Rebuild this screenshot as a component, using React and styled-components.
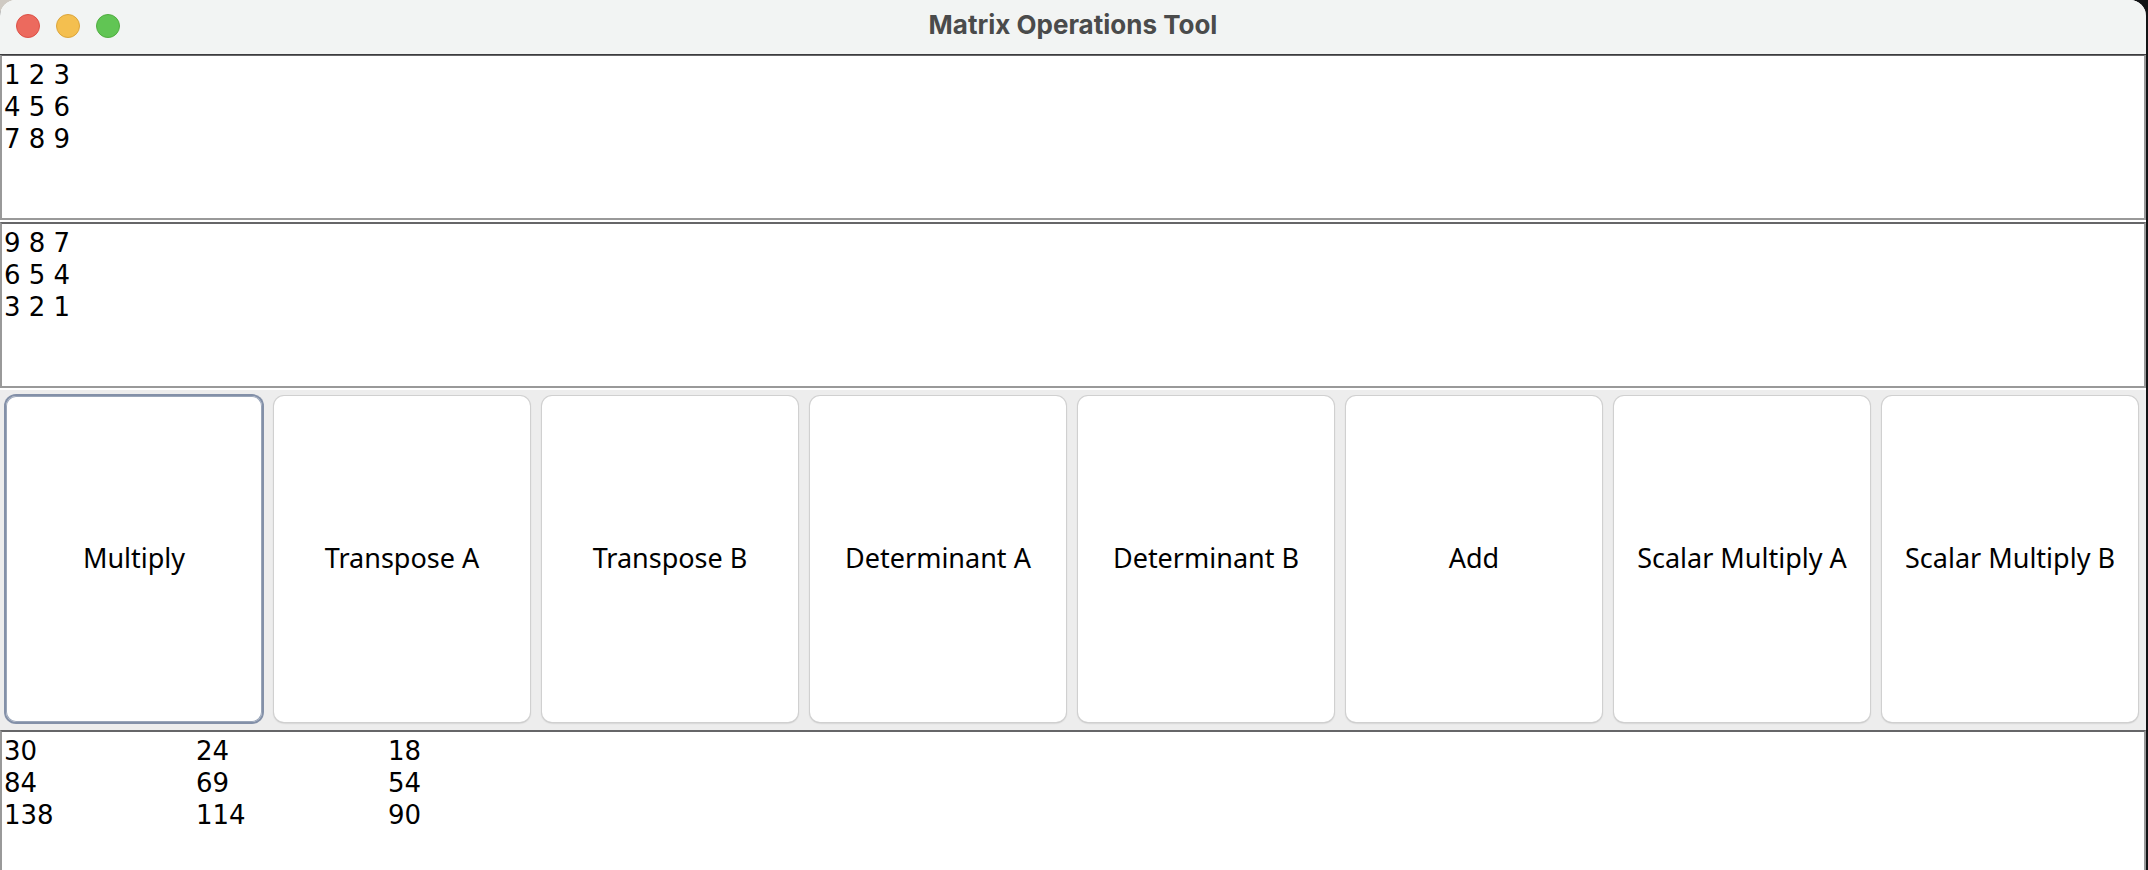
import React, { useState } from "react";
import styled, { createGlobalStyle } from "styled-components";

const GlobalStyle = createGlobalStyle`
  * { box-sizing: border-box; }
  html, body, #root { height: 100%; }
  body {
    margin: 0;
    overflow: hidden;
    background: linear-gradient(90deg, #cfcac3 0 50%, #121315 50%);
  }
`;

const Window = styled.main`
  display: flex;
  flex-direction: column;
  height: 100%;
  margin-right: 2px;
  overflow: hidden;
  border-radius: 16px 16px 0 0;
  background: #ffffff;
  color: #000000;
`;

const TitleBar = styled.header`
  position: relative;
  display: grid;
  grid-template-columns: 1fr auto 1fr;
  align-items: center;
  flex: none;
  height: 54px;
  padding: 0 16px 2px;
  background: #f2f4f3;
  box-shadow: 0 1px 0 #3c3c3e;
`;

const WindowControls = styled.div`
  display: flex;
  gap: 16px;
`;

const Light = styled.button`
  width: 24px;
  height: 24px;
  padding: 0;
  border: 1px solid ${(p) => p.$edge};
  border-radius: 50%;
  background: ${(p) => p.$fill};
`;

const Title = styled.h1`
  margin: 0;
  padding-bottom: 2px;
  font-family: Inter, sans-serif;
  font-size: 26px;
  font-weight: 700;
  line-height: 32px;
  color: #4a4b4b;
`;

const MatrixArea = styled.textarea`
  display: block;
  flex: ${(p) => (p.$fill ? "1 1 0" : "none")};
  width: 100%;
  height: 166px;
  margin: 0 0 ${(p) => (p.$fill ? 0 : 2)}px;
  padding: 3px 2px 0;
  border: 2px solid #999999;
  border-top-color: #666668;
  border-bottom-width: ${(p) => (p.$fill ? 0 : 2)}px;
  border-radius: 0;
  outline: none;
  resize: none;
  overflow: hidden;
  background: #ffffff;
  color: inherit;
  font-family: "Lucida Grande", "DejaVu Sans", sans-serif;
  font-size: 26px;
  line-height: 32px;
  tab-size: 192px;
`;

const ButtonPanel = styled.section`
  display: grid;
  grid-template-columns: repeat(8, 1fr);
  gap: 12px;
  flex: none;
  height: 340px;
  padding: 6px 8px 8px 6px;
  background: #ededed;
`;

const Operation = styled.button`
  min-width: 0;
  padding: 0 0 2px;
  border: 0;
  border-radius: 10px;
  outline: none;
  background: #ffffff;
  box-shadow: ${(p) =>
    p.$selected
      ? "inset 0 0 0 1px #9aa6b9, 0 0 0 2px #8390a8"
      : "0 0 0 1px #d0d0d0, 0 1px 2px rgba(0, 0, 0, 0.3)"};
  color: inherit;
  font-family: "Lucida Grande", "Noto Sans", sans-serif;
  font-size: 27px;
  line-height: 32px;
  white-space: nowrap;
`;

const lights = [
  { name: "Close", fill: "#ec6a5e", edge: "#dc5147" },
  { name: "Minimize", fill: "#f4bf4f", edge: "#dba53c" },
  { name: "Zoom", fill: "#61c554", edge: "#51ad40" },
];

const operations = [
  "Multiply",
  "Transpose A",
  "Transpose B",
  "Determinant A",
  "Determinant B",
  "Add",
  "Scalar Multiply A",
  "Scalar Multiply B",
];

export default function App() {
  const [matrixA, setMatrixA] = useState("1 2 3\n4 5 6\n7 8 9");
  const [matrixB, setMatrixB] = useState("9 8 7\n6 5 4\n3 2 1");
  const [selected, setSelected] = useState("Multiply");

  return (
    <>
      <GlobalStyle />
      <Window>
        <TitleBar>
          <WindowControls>
            {lights.map((l) => (
              <Light key={l.name} type="button" aria-label={l.name} $fill={l.fill} $edge={l.edge} />
            ))}
          </WindowControls>
          <Title>Matrix Operations Tool</Title>
        </TitleBar>
        <MatrixArea
          aria-label="Matrix A"
          spellCheck={false}
          value={matrixA}
          onChange={(e) => setMatrixA(e.target.value)}
        />
        <MatrixArea
          aria-label="Matrix B"
          spellCheck={false}
          value={matrixB}
          onChange={(e) => setMatrixB(e.target.value)}
        />
        <ButtonPanel aria-label="Operations">
          {operations.map((name) => (
            <Operation
              key={name}
              type="button"
              $selected={name === selected}
              onClick={() => setSelected(name)}
            >
              {name}
            </Operation>
          ))}
        </ButtonPanel>
        <MatrixArea
          aria-label="Result"
          readOnly
          $fill
          value={"30\t24\t18\n84\t69\t54\n138\t114\t90"}
        />
      </Window>
    </>
  );
}
